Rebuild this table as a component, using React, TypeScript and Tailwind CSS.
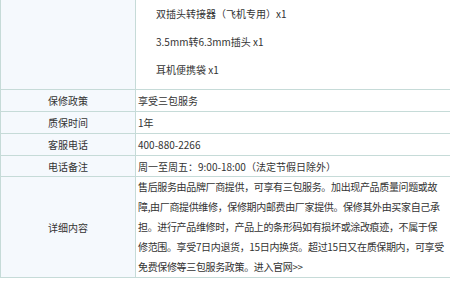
const font = "font-['Noto_Sans_CJK_SC','Noto_Sans',sans-serif]";

const accessories = ["双插头转接器（飞机专用）x1", "3.5mm转6.3mm插头 x1", "耳机便携袋 x1"];

const rows = [
  { label: "保修政策", value: "享受三包服务", h: "h-[22px]" },
  { label: "质保时间", value: "1年", h: "h-[22px]" },
  { label: "客服电话", value: "400-880-2266", h: "h-[22px]" },
  { label: "电话备注", value: "周一至周五：9:00-18:00（法定节假日除外）", h: "h-[21px]" },
];

const detail = [
  "售后服务由品牌厂商提供，可享有三包服务。加出现产品质量问题或故",
  "障,由厂商提供维修，保修期内邮费由厂家提供。保修其外由买家自己承",
  "担。进行产品维修时，产品上的条形码如有损坏或涂改痕迹，不属于保",
  "修范围。享受7日内退货，15日内换货。超过15日又在质保期内，可享受",
  "免费保修等三包服务政策。进入官网>>",
];

export default function App() {
  return (
    <div className={`w-[450px] h-[282px] overflow-hidden bg-white text-[10px] text-[#333] ${font}`}>
      <div className="border-l border-b border-[#c6dbd8]">
        <div className="flex border-b border-[#c6dbd8]">
          <div className="w-[135px] shrink-0 border-r border-[#c6dbd8] bg-[#f5f9fd]" />
          <div className="flex-1 pl-5 pb-[5px]">
            {accessories.map((a) => (
              <div key={a} className="h-[28px] leading-[28px] whitespace-nowrap">
                {a}
              </div>
            ))}
          </div>
        </div>

        {rows.map((r) => (
          <div key={r.label} className={`flex border-b border-[#c6dbd8] ${r.h}`}>
            <div className="w-[135px] shrink-0 border-r border-[#c6dbd8] bg-[#f5f9fd] flex items-center justify-center">
              {r.label}
            </div>
            <div className="flex-1 pl-[2px] flex items-center whitespace-nowrap">{r.value}</div>
          </div>
        ))}

        <div className="flex">
          <div className="w-[135px] shrink-0 border-r border-[#c6dbd8] bg-[#f5f9fd] flex items-center justify-center">
            详细内容
          </div>
          <div className="flex-1 min-w-0 pl-[2px] leading-[20px] tracking-[-0.35px]">
            {detail.map((l) => (
              <div key={l} className="whitespace-nowrap">
                {l}
              </div>
            ))}
          </div>
        </div>
      </div>
    </div>
  );
}
